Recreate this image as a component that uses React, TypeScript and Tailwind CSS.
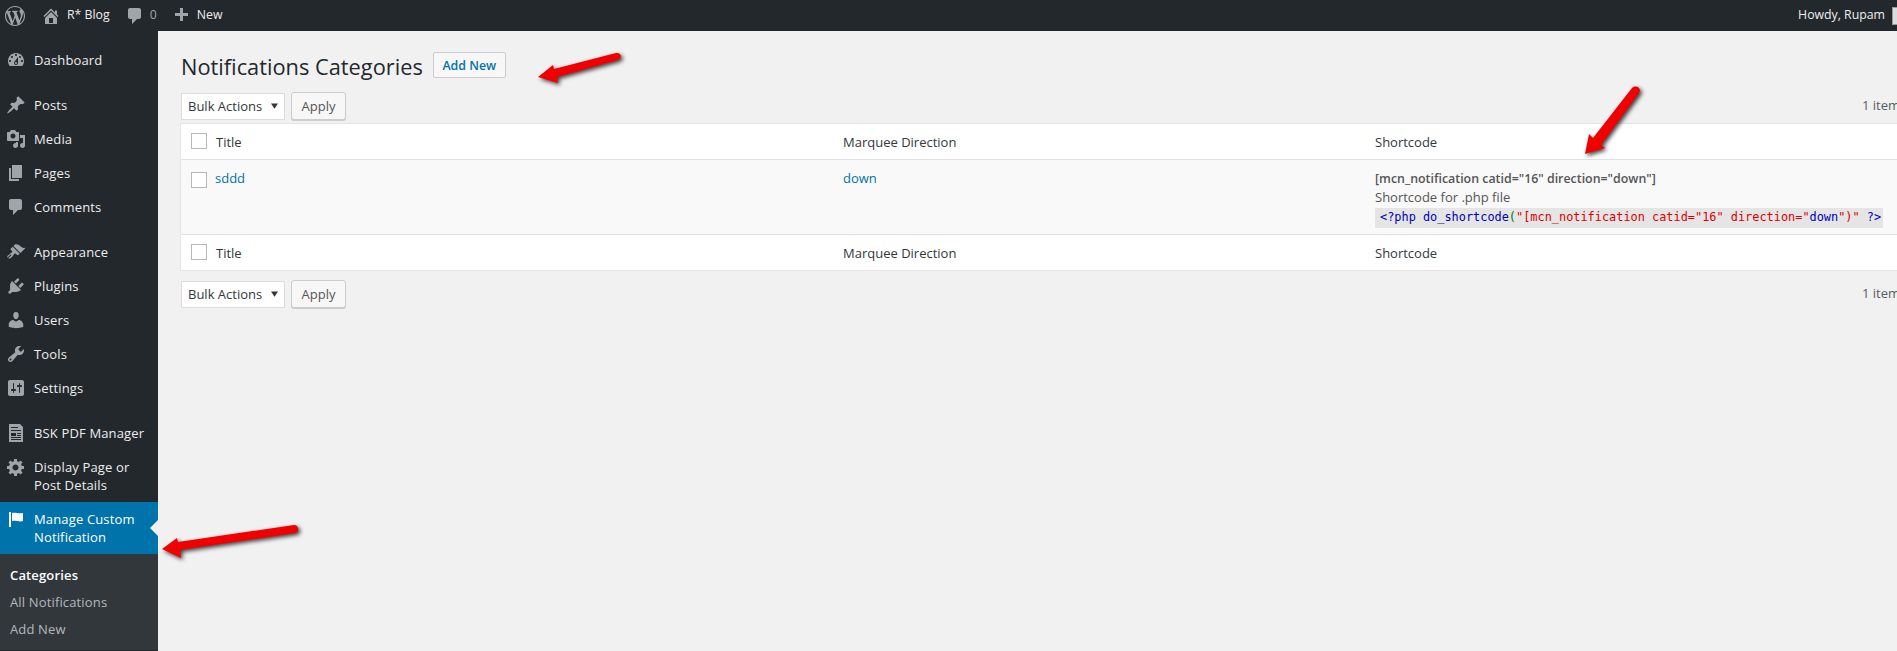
const icons: Record<string, string> = {
  wp: 'M20 10c0-5.51-4.49-10-10-10C4.48 0 0 4.49 0 10c0 5.52 4.48 10 10 10 5.51 0 10-4.48 10-10zM7.78 15.37L4.37 6.22c.55-.02 1.17-.08 1.17-.08.5-.06.44-1.13-.06-1.11 0 0-1.45.11-2.37.11-.18 0-.37 0-.58-.01C4.12 2.69 6.87 1.11 10 1.11c2.33 0 4.45.87 6.05 2.34-.68-.11-1.65.39-1.65 1.58 0 .74.45 1.36.9 2.1.35.61.55 1.36.55 2.46 0 1.49-1.4 5-1.4 5l-3.03-8.37c.54-.02.82-.17.82-.17.5-.05.44-1.25-.06-1.22 0 0-1.44.12-2.38.12-.87 0-2.33-.12-2.33-.12-.5-.03-.56 1.2-.06 1.22l.92.08 1.26 3.41zM17.41 10c.24-.64.74-1.87.43-4.25.7 1.29 1.05 2.71 1.05 4.25 0 3.29-1.73 6.24-4.4 7.78.97-2.59 1.94-5.2 2.92-7.78zM6.1 18.09C3.12 16.65 1.11 13.53 1.11 10c0-1.3.23-2.48.72-3.59C3.25 10.3 4.67 14.2 6.1 18.09zm4.03-6.63l2.58 6.98c-.86.29-1.76.45-2.71.45-.79 0-1.57-.11-2.29-.33.81-2.38 1.62-4.74 2.42-7.1z',
  home: 'M16 8.5l1.53 1.53-1.06 1.06L10 4.62l-6.47 6.47-1.06-1.06L10 2.5l4 4v-2h2v4zm-6-2.46l6 5.99V18H4v-5.97zM12 17v-5H8v5h4z',
  comment: 'M5 2h9c1.1 0 2 .9 2 2v7c0 1.1-.9 2-2 2h-2l-5 5v-5H5c-1.1 0-2-.9-2-2V4c0-1.1.9-2 2-2z',
  plus: 'M17 7v3h-5v5H9v-5H4V7h5V2h3v5h5z',
  dashboard: 'M3.76 16h12.48c1.1-1.37 1.76-3.11 1.76-5 0-4.42-3.58-8-8-8s-8 3.58-8 8c0 1.89.66 3.63 1.76 5zM10 4c.55 0 1 .45 1 1s-.45 1-1 1-1-.45-1-1 .45-1 1-1zM6 6c.55 0 1 .45 1 1s-.45 1-1 1-1-.45-1-1 .45-1 1-1zm8 0c.55 0 1 .45 1 1s-.45 1-1 1-1-.45-1-1 .45-1 1-1zm-5.37 5.55L12 7v6c0 1.1-.9 2-2 2s-2-.9-2-2c0-.57.24-1.08.63-1.45zM4 10c.55 0 1 .45 1 1s-.45 1-1 1-1-.45-1-1 .45-1 1-1zm12 0c.55 0 1 .45 1 1s-.45 1-1 1-1-.45-1-1 .45-1 1-1zm-5 3c0-.55-.45-1-1-1s-1 .45-1 1 .45 1 1 1 1-.45 1-1z',
  post: 'M10.44 3.02l1.82-1.82 6.36 6.35-1.83 1.82c-1.05-.68-2.48-.57-3.41.36l-.75.75c-.92.93-1.04 2.35-.35 3.41l-1.83 1.82-2.41-2.41-2.8 2.79c-.42.42-3.38 2.71-3.8 2.29s1.86-3.39 2.28-3.81l2.79-2.79L4.1 9.36l1.83-1.82c1.05.69 2.48.57 3.4-.36l.75-.75c.93-.92 1.05-2.35.36-3.41z',
  media: 'M13 11V4c0-.55-.45-1-1-1h-1.67L9 1H5L3.67 3H2c-.55 0-1 .45-1 1v7c0 .55.45 1 1 1h10c.55 0 1-.45 1-1zM7 4.5c1.38 0 2.5 1.12 2.5 2.5S8.38 9.5 7 9.5 4.5 8.38 4.5 7 5.62 4.5 7 4.5zM14 6h5v10.5c0 1.38-1.12 2.5-2.5 2.5S14 17.88 14 16.5s1.12-2.5 2.5-2.5c.17 0 .34.02.5.05V9h-3V6zm-4 8.05V13h2v3.5c0 1.38-1.12 2.5-2.5 2.5S7 17.88 7 16.5 8.12 14 9.5 14c.17 0 .34.02.5.05z',
  pages: 'M6 15V2h10v13H6zm-1 1h8v2H3V5h2v11z',
  appearance: 'M14.48 11.06L7.41 3.99l1.5-1.5c.5-.56 2.3-.47 3.51.32 1.21.8 1.43 1.28 2.91 2.1 1.18.64 2.45 1.26 4.45.85zm-.71.71L6.7 4.7 4.93 6.47c-.39.39-.39 1.02 0 1.41l1.06 1.06c.39.39.39 1.03 0 1.42-.6.6-1.43 1.11-2.21 1.69-.35.26-.7.53-1.01.84C1.43 13.23.91 14.76 1.5 15.6l2.9-2.9c.19-.2.51-.2.7 0 .2.19.2.51 0 .7l-2.9 2.9c.84.59 2.37.07 3.72-1.28.31-.31.58-.66.84-1.01.58-.78 1.09-1.61 1.69-2.21.39-.39 1.03-.39 1.42 0l1.06 1.06c.39.39 1.02.39 1.41 0z',
  plugins: 'M13.11 4.36L9.87 7.6 8 5.73l3.24-3.24c.35-.34 1.05-.2 1.56.32.52.51.66 1.21.31 1.55zm-8 1.77l.91-1.12 9.01 9.01-1.19.84c-.71.71-2.63 1.16-3.82 1.16H6.14L4.9 17.26c-.59.59-1.54.59-2.12 0-.59-.58-.59-1.53 0-2.12l1.24-1.24v-3.88c0-1.13.4-3.19 1.09-3.89zm7.26 3.97l3.24-3.24c.34-.35 1.04-.21 1.55.31.52.51.66 1.21.31 1.55l-3.24 3.25z',
  users: 'M10 9.25c-2.27 0-2.73-3.44-2.73-3.44C7 4.02 7.82 2 9.97 2c2.16 0 2.98 2.02 2.71 3.81 0 0-.41 3.44-2.68 3.44zm0 2.57L12.72 10c2.39 0 4.52 2.33 4.52 4.53v2.49s-3.65 1.13-7.24 1.13c-3.65 0-7.24-1.13-7.24-1.13v-2.49c0-2.25 1.94-4.48 4.47-4.48z',
  tools: 'M16.68 9.77c-1.34 1.34-3.3 1.67-4.95.99l-5.41 6.52c-.99.99-2.59.99-3.58 0s-.99-2.59 0-3.57l6.52-5.42c-.68-1.65-.35-3.61.99-4.95 1.28-1.28 3.12-1.62 4.72-1.06l-2.89 2.89 2.82 2.82 2.86-2.87c.53 1.58.18 3.39-1.08 4.67zM3.81 16.21c.4.39 1.04.39 1.43 0 .4-.4.4-1.04 0-1.43-.39-.4-1.03-.4-1.43 0-.39.39-.39 1.03 0 1.43z',
  settings: 'M18 16V4c0-1.1-.9-2-2-2H4c-1.1 0-2 .9-2 2v12c0 1.1.9 2 2 2h12c1.1 0 2-.9 2-2zM8 11h1c.55 0 1 .45 1 1s-.45 1-1 1H8v1.5c0 .28-.22.5-.5.5s-.5-.22-.5-.5V13H6c-.55 0-1-.45-1-1s.45-1 1-1h1V5.5c0-.28.22-.5.5-.5s.5.22.5.5V11zm5-2h-1c-.55 0-1-.45-1-1s.45-1 1-1h1V5.5c0-.28.22-.5.5-.5s.5.22.5.5V7h1c.55 0 1 .45 1 1s-.45 1-1 1h-1v5.5c0 .28-.22.5-.5.5s-.5-.22-.5-.5V9z',
  doc: 'M3 1h11l3 3v15H3V1zm2 3v1h7V4H5zm0 3v1h10V7H5zm0 3v3h5v-3H5zm6 0v1h4v-1h-4zm0 2v1h4v-1h-4zM5 14v1h10v-1H5zm0 2v1h10v-1H5z',
  gear: 'M18 12h-2.18c-.17.7-.44 1.35-.81 1.93l1.54 1.54-2.1 2.1-1.54-1.54c-.58.36-1.23.63-1.91.79V19H8v-2.18c-.68-.16-1.33-.43-1.91-.79l-1.54 1.54-2.12-2.12 1.54-1.54c-.36-.58-.63-1.23-.79-1.91H1V9.03h2.17c.16-.7.44-1.35.8-1.94L2.43 5.55l2.1-2.1 1.54 1.54c.58-.37 1.24-.64 1.93-.81V2h3v2.18c.68.16 1.33.43 1.91.79l1.54-1.54 2.12 2.12-1.54 1.54c.36.59.64 1.24.8 1.94H18V12zm-8.5 1.5c1.66 0 3-1.34 3-3s-1.34-3-3-3-3 1.34-3 3 1.34 3 3 3z',
  flag: 'M5 18V3H3v15h2zm1-6V4c3-1 7 1 11 0v8c-3 1.27-8-1-11 0z',
}

function Icon({ name, className }: { name: string; className: string }) {
  return (
    <svg viewBox="0 0 20 20" fill="currentColor" className={className}>
      <path d={icons[name]} />
    </svg>
  )
}

type MenuEntry = { icon: string; label: string[]; gapBefore?: boolean }

const menu: MenuEntry[] = [
  { icon: 'dashboard', label: ['Dashboard'] },
  { icon: 'post', label: ['Posts'], gapBefore: true },
  { icon: 'media', label: ['Media'] },
  { icon: 'pages', label: ['Pages'] },
  { icon: 'comment', label: ['Comments'] },
  { icon: 'appearance', label: ['Appearance'], gapBefore: true },
  { icon: 'plugins', label: ['Plugins'] },
  { icon: 'users', label: ['Users'] },
  { icon: 'tools', label: ['Tools'] },
  { icon: 'settings', label: ['Settings'] },
  { icon: 'doc', label: ['BSK PDF Manager'], gapBefore: true },
  { icon: 'gear', label: ['Display Page or', 'Post Details'] },
]

function Sidebar() {
  return (
    <aside className="w-[158px] shrink-0 bg-[#23282d] pt-3 text-[13px] leading-[18px] tracking-[0.15px] text-[#eeeeee]">
      {menu.map((item) => (
        <div
          key={item.label[0]}
          className={`flex gap-[8px] py-[8px] pl-[6px] ${item.gapBefore ? 'mt-[11px]' : ''}`}
        >
          <Icon name={item.icon} className="my-[-1px] h-5 w-5 shrink-0 text-[#a0a5aa]" />
          <div>
            {item.label.map((line) => (
              <div key={line}>{line}</div>
            ))}
          </div>
        </div>
      ))}

      <div className="relative flex gap-[8px] bg-[#0073aa] py-[8px] pl-[6px] text-white">
        <Icon name="flag" className="my-[-1px] h-5 w-5 shrink-0 text-white" />
        <div>
          <div>Manage Custom</div>
          <div>Notification</div>
        </div>
        <div className="absolute right-0 top-[18px] h-0 w-0 border-y-[8px] border-r-[8px] border-y-transparent border-r-[#f1f1f1]" />
      </div>

      <div className="bg-[#32373c] pb-[7px] pt-[8px] leading-[27px] text-[#b4b9be]">
        <div className="pl-[10px] font-semibold text-white">Categories</div>
        <div className="pl-[10px]">All Notifications</div>
        <div className="pl-[10px]">Add New</div>
      </div>
    </aside>
  )
}

function AdminBar() {
  return (
    <header className="flex h-[31px] shrink-0 items-center bg-[#23282d] text-[12.3px] text-[#eeeeee]">
      <Icon name="wp" className="ml-[5px] h-5 w-5 text-[#a0a5aa]" />
      <Icon name="home" className="ml-[16px] h-5 w-5 text-[#a0a5aa]" />
      <span className="ml-[6px]">R* Blog</span>
      <Icon name="comment" className="ml-[15px] h-5 w-5 text-[#a0a5aa]" />
      <span className="ml-[5px] text-[#a0a5aa]">0</span>
      <Icon name="plus" className="ml-[14px] h-5 w-5 text-[#a0a5aa]" />
      <span className="ml-[6px]">New</span>
      <span className="ml-auto">Howdy, Rupam</span>
      <div className="ml-[7px] h-[18px] w-[5px] border-y border-l border-[#999] bg-[#ddd]" />
    </header>
  )
}

function BulkBar() {
  return (
    <div className="flex w-[1719px] items-center">
      <div className="flex h-[27px] w-[104px] items-center justify-between border border-[#dddddd] bg-white pl-[6px] pr-[6px] pt-[2px] text-[#32373c]">
        <span>Bulk Actions</span>
        <svg viewBox="0 0 8 6" className="mt-[-3px] h-[6px] w-[7px] fill-[#32373c]">
          <path d="M0 0h8L4 6z" />
        </svg>
      </div>
      <div className="ml-[6px] flex h-[28px] w-[55px] items-center justify-center rounded-[3px] border border-[#cccccc] bg-[#f7f7f7] pt-[2px] text-[#555555] shadow-[0_1px_0_#cccccc]">
        Apply
      </div>
      <span className="ml-auto text-[#555d66]">1 item</span>
    </div>
  )
}

function Checkbox() {
  return <div className="h-4 w-4 border border-[#b4b9be] bg-white" />
}

function HeaderRow({ rowClass }: { rowClass: string }) {
  return (
    <tr className={`bg-white text-[#32373c] ${rowClass}`}>
      <td className="pl-[10px] pr-0 align-middle">
        <Checkbox />
      </td>
      <td className="pl-[8px] pt-[2px] align-middle">Title</td>
      <td className="pl-[8px] pt-[2px] align-middle">Marquee Direction</td>
      <td className="pl-[8px] pt-[2px] align-middle">Shortcode</td>
    </tr>
  )
}

function Arrow({ className, w, h, d }: { className: string; w: number; h: number; d: string }) {
  return (
    <svg
      viewBox={`0 0 ${w} ${h}`}
      width={w}
      height={h}
      className={`absolute overflow-visible drop-shadow-[2px_2px_2px_rgba(0,0,0,0.75)] ${className}`}
    >
      <path d={d} fill="#f00000" />
    </svg>
  )
}

export default function App() {
  return (
    <div
      className="relative flex h-[651px] w-[1897px] flex-col overflow-hidden bg-[#f1f1f1] text-[13px]"
      style={{ fontFamily: '"Open Sans", sans-serif' }}
    >
      <AdminBar />
      <div className="flex min-h-0 flex-1">
        <Sidebar />
        <main className="min-w-0 flex-1 pl-[23px]">
          <div className="flex h-[61px] items-center pt-[6px]">
            <h1 className="mt-[3px] text-[21.8px] font-normal leading-[29px] text-[#23282d]">Notifications Categories</h1>
            <div className="ml-[10px] flex h-[26px] w-[73px] items-center justify-center rounded-[2px] border border-[#cccccc] bg-[#f7f7f7] pt-[3px] text-[12.4px] font-semibold text-[#0073aa]">
              Add New
            </div>
          </div>

          <BulkBar />

          <table className="mt-[4px] w-[1719px] table-fixed border-collapse shadow-[0_0_0_1px_#e5e5e5]">
            <colgroup>
              <col className="w-[27px]" />
              <col className="w-[627px]" />
              <col className="w-[532px]" />
              <col />
            </colgroup>
            <thead>
              <HeaderRow rowClass="h-[35px] border-b border-[#e1e1e1]" />
            </thead>
            <tbody>
              <tr className="h-[75px] border-b border-[#e1e1e1] bg-[#f9f9f9] align-top">
                <td className="pl-[10px] pt-[12px]">
                  <Checkbox />
                </td>
                <td className="pl-[7px] pt-[9px] leading-[19px] text-[#0073aa]">sddd</td>
                <td className="pl-[8px] pt-[9px] leading-[19px] text-[#0073aa]">down</td>
                <td className="pl-[8px] pt-[9px] leading-[19px] text-[#555555]">
                  <div className="text-[12.4px] font-semibold">[mcn_notification catid="16" direction="down"]</div>
                  <div>Shortcode for .php file</div>
                  <div
                    className="mt-[1px] flex h-[20px] w-[508px] items-center whitespace-pre bg-[#e5e5e5] pl-[5px] text-[11.9px]"
                    style={{ fontFamily: '"DejaVu Sans Mono", monospace' }}
                  >
                    <span className="text-[#0000bb]">{'<?php do_shortcode'}</span>
                    <span className="text-[#007700]">(</span>
                    <span className="text-[#dd0000]">{'"[mcn_notification catid="16" direction="'}</span>
                    <span className="text-[#0000bb]">down</span>
                    <span className="text-[#dd0000]">")"</span>
                    <span className="text-[#0000bb]">{' ?>'}</span>
                  </div>
                </td>
              </tr>
            </tbody>
            <tfoot>
              <HeaderRow rowClass="h-[36px]" />
            </tfoot>
          </table>

          <div className="mt-[10px]">
            <BulkBar />
          </div>
        </main>
      </div>

      <Arrow
        className="left-[162px] top-[525px]"
        w={137}
        h={34}
        d="M0 24L15 13L16 17L132 0C137 0 138 7 133 8L18 25L19 33Z"
      />
      <Arrow
        className="left-[538px] top-[52px]"
        w={85}
        h={32}
        d="M0 25L15 13L16 17L78 1C83 0 85 6 80 8L19 25L20 31Z"
      />
      <Arrow
        className="left-[1585px] top-[86px]"
        w={56}
        h={69}
        d="M0 68L4 48L8 52L47 2C52 -2 57 3 54 7L16 59L20 62Z"
      />
    </div>
  )
}
